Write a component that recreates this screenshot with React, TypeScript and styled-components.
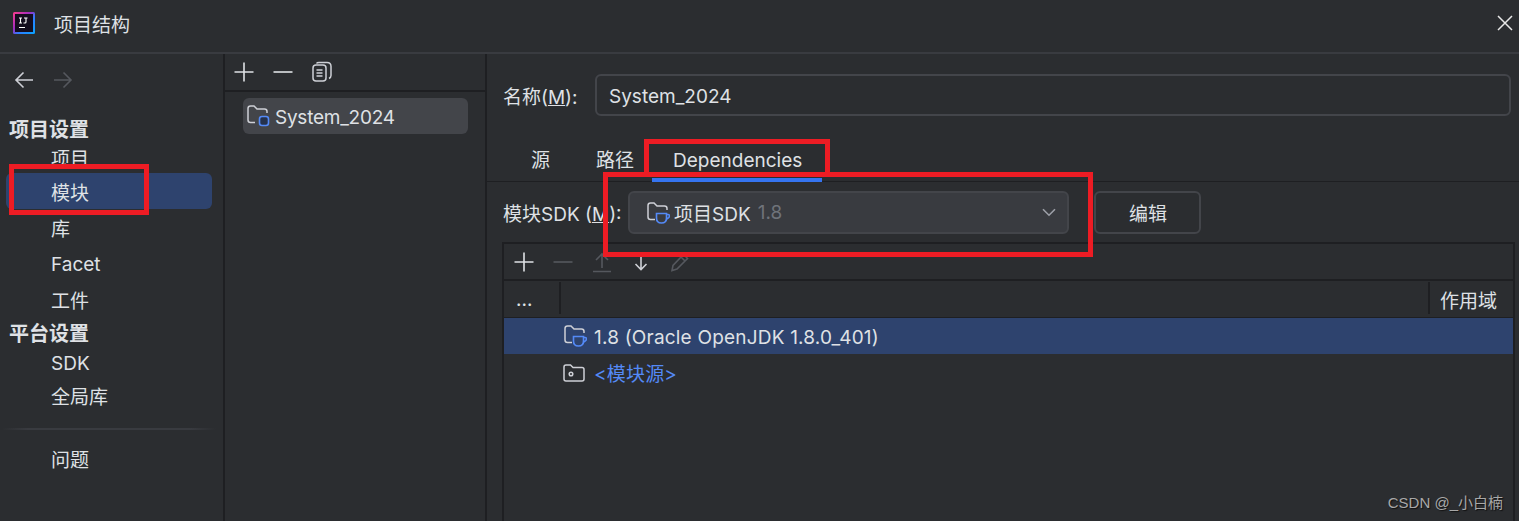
import React from "react";
import styled, { createGlobalStyle } from "styled-components";

const Global = createGlobalStyle`
  html, body { margin: 0; padding: 0; background: #2b2d30; }
  body { width: 1519px; height: 521px; overflow: hidden; }
  #root { width: 1519px; height: 521px; }
  * { box-sizing: border-box; }
`;

const Page = styled.div`
  position: relative;
  width: 1519px;
  height: 521px;
  overflow: hidden;
  display: flex;
  flex-direction: column;
  background: #2b2d30;
  color: #dfe1e5;
  font-family: Inter, "Noto Sans CJK SC", sans-serif;
  font-size: 19px;
`;

const TitleBar = styled.header`
  height: 54px;
  flex: none;
  display: flex;
  align-items: center;
  padding: 0 6px 6px 13px;
  border-bottom: 2px solid #393b40;
`;
const TitleText = styled.span`
  margin-left: 19px;
  flex: 1;
  font-size: 19px;
`;
const Body = styled.div`
  flex: 1;
  display: flex;
  min-height: 0;
`;
const Sidebar = styled.nav`
  width: 225px;
  flex: none;
  padding: 0 11px 0 6px;
  border-right: 2px solid #1e1f22;
  display: flex;
  flex-direction: column;
`;
const NavArrows = styled.div`
  height: 26px;
  margin-top: 13px;
  display: flex;
  gap: 19px;
  padding-left: 8px;
  align-items: center;
`;
const SectionHead = styled.div<{ $top: number }>`
  margin: ${(p) => p.$top}px 0 0 3px;
  font-size: 20px;
  line-height: 28px;
  font-weight: 700;
  color: #dfe1e5;
`;
const NavItem = styled.div<{ $active?: boolean; $h?: number; $mb?: number; $latin?: boolean }>`
  height: ${(p) => p.$h ?? 36}px;
  margin-bottom: ${(p) => p.$mb ?? 0}px;
  display: flex;
  align-items: center;
  padding: ${(p) => (p.$latin ? "2px" : "0")} 0 0 45px;
  border-radius: 6px;
  background: ${(p) => (p.$active ? "#2e436e" : "transparent")};
`;
const NavDivider = styled.div`
  height: 2px;
  margin: 17px -4px 10px;
  background: linear-gradient(90deg, #2b2d30, #393b40 12%, #393b40 88%, #2b2d30);
`;
const ModulePanel = styled.section`
  width: 262px;
  flex: none;
  border-right: 2px solid #1e1f22;
  display: flex;
  flex-direction: column;
`;
const IconBar = styled.div`
  height: 38px;
  flex: none;
  display: flex;
  align-items: center;
  gap: 17px;
  padding-left: 8px;
  border-bottom: 2px solid #1e1f22;
`;
const ModuleRow = styled.div`
  margin: 6px 17px 0 18px;
  height: 36px;
  display: flex;
  align-items: center;
  gap: 5px;
  padding-left: 3px;
  border-radius: 6px;
  background: #43454a;
  letter-spacing: -0.25px;
`;
const ModuleName = styled.span`
  padding-top: 2px;
`;
const Detail = styled.main`
  flex: 1;
  min-width: 0;
  display: flex;
  flex-direction: column;
`;
const NameRow = styled.div`
  display: flex;
  align-items: center;
  padding: 20px 8px 0 16px;
`;
const FieldLabel = styled.label<{ $w: number }>`
  width: ${(p) => p.$w}px;
  flex: none;
  white-space: nowrap;
`;
const NameInput = styled.div`
  flex: 1;
  height: 42px;
  display: flex;
  align-items: center;
  padding: 2px 0 0 12px;
  border: 2px solid #43454a;
  border-radius: 6px;
`;
const Tabs = styled.div`
  position: relative;
  height: 66px;
  flex: none;
  display: flex;
  align-items: flex-start;
  padding: 33px 0 0 44px;
  border-bottom: 1.5px solid #1e1f22;
`;
const Tab = styled.div<{ $ml?: number }>`
  margin-left: ${(p) => p.$ml ?? 0}px;
  line-height: 24px;
`;
const TabUnderline = styled.div`
  position: absolute;
  left: 165px;
  bottom: -1px;
  width: 170px;
  height: 4px;
  background: #3574f0;
`;
const SdkRow = styled.div`
  display: flex;
  align-items: center;
  padding: 9px 0 0 16px;
`;
const Combo = styled.div`
  width: 441px;
  height: 43px;
  display: flex;
  align-items: center;
  gap: 4px;
  padding: 0 11px 0 16px;
  background: #393b40;
  border: 2px solid #43454a;
  border-radius: 6px;
`;
const Muted = styled.span`
  color: #6f737a;
  margin-left: 3px;
  flex: 1;
`;
const EditButton = styled.button`
  width: 107px;
  height: 43px;
  margin-left: 25px;
  background: transparent;
  border: 2px solid #43454a;
  border-radius: 6px;
  color: #dfe1e5;
  font: inherit;
  padding: 0 0 0 1px;
`;
const TableBox = styled.section`
  flex: 1;
  margin: 8px 4px 0 15px;
  border: 2px solid #1e1f22;
  border-bottom: none;
  display: flex;
  flex-direction: column;
  min-height: 0;
`;
const TableTools = styled.div`
  height: 37px;
  flex: none;
  display: flex;
  align-items: center;
  gap: 17px;
  padding-left: 9px;
  border-bottom: 2px solid #1e1f22;
`;
const TableHead = styled.div`
  height: 37px;
  flex: none;
  display: flex;
  align-items: stretch;
  border-bottom: 1.5px solid #1e1f22;
`;
const HeadCell = styled.div<{ $w?: number; $pad?: number }>`
  ${(p) => (p.$w ? `width: ${p.$w}px; flex: none;` : "flex: 1;")}
  display: flex;
  align-items: center;
  padding: 2px 0 0 ${(p) => p.$pad ?? 10}px;
  margin: 1px 0 3px;
  white-space: nowrap;
  & + & { border-left: 2px solid #1e1f22; }
`;
const Row = styled.div<{ $selected?: boolean }>`
  height: 36px;
  display: flex;
  align-items: center;
  gap: 7px;
  padding-left: 59px;
  background: ${(p) => (p.$selected ? "#2e436e" : "transparent")};
  letter-spacing: 0.2px;
`;
const RowText = styled.span`
  padding-top: 2px;
`;
const LinkText = styled.span`
  color: #548af7;
  margin-left: 2px;
`;
const SourceIconWrap = styled.span`
  display: flex;
  padding-top: 2px;
`;
const Watermark = styled.div`
  position: absolute;
  right: 16px;
  bottom: 8px;
  font-family: "Liberation Sans", "Noto Sans CJK SC", sans-serif;
  font-size: 15px;
  line-height: 20px;
  color: #a8a8a8;
  text-shadow: 1px 1px 1px #111;
`;
const RedBox = styled.div<{ $l: number; $t: number; $w: number; $h: number }>`
  position: absolute;
  left: ${(p) => p.$l}px;
  top: ${(p) => p.$t}px;
  width: ${(p) => p.$w}px;
  height: ${(p) => p.$h}px;
  border: 5px solid #ed1c24;
  pointer-events: none;
`;
const CloseWrap = styled.span`
  display: flex;
`;

const S = { fill: "none", strokeWidth: 1.6, strokeLinecap: "butt" as const };

const Plus = ({ c = "#dfe1e5" }: { c?: string }) => (
  <svg width="22" height="22" viewBox="0 0 22 22" {...S} stroke={c}>
    <path d="M11 1.5v19M1.5 11h19" />
  </svg>
);
const Minus = ({ c = "#dfe1e5" }: { c?: string }) => (
  <svg width="22" height="22" viewBox="0 0 22 22" {...S} stroke={c}>
    <path d="M1.5 11h19" />
  </svg>
);
const Copy = () => (
  <svg width="22" height="22" viewBox="0 0 22 22" {...S} stroke="#ced0d6" strokeWidth={1.5}>
    <rect x="2" y="4" width="13" height="16" rx="3" />
    <path d="M5.5 2.5 Q6 1.5 8 1.5h8q4 0 4 4v9q0 2-2 3M5.5 9h6M5.5 12h6M5.5 15h6" />
  </svg>
);
const ArrowLeft = () => (
  <svg width="20" height="18" viewBox="0 0 20 18" {...S} stroke="#ced0d6">
    <path d="M19 9H2M9.5 1.5 2 9l7.5 7.5" />
  </svg>
);
const ArrowRight = () => (
  <svg width="20" height="18" viewBox="0 0 20 18" {...S} stroke="#55585e">
    <path d="M1 9h17M10.5 1.5 18 9l-7.5 7.5" />
  </svg>
);
const UpToBar = () => (
  <svg width="22" height="22" viewBox="0 0 22 22" {...S} stroke="#55585e">
    <path d="M11 17V3M5 9l6-6 6 6M2 20.5h18" />
  </svg>
);
const Down = () => (
  <svg width="22" height="22" viewBox="0 0 22 22" {...S} stroke="#ced0d6">
    <path d="M11 3.5v15M5.5 13l5.5 5.5 5.5-5.5" />
  </svg>
);
const Pencil = () => (
  <svg width="22" height="22" viewBox="0 0 22 22" {...S} stroke="#55585e">
    <path d="M14.5 3.5l4 4L8 18l-5 1.5L4 14.5zM12 6l4 4" />
  </svg>
);
const Close = () => (
  <svg width="16" height="16" viewBox="0 0 16 16" fill="none" stroke="#e8e8e8" strokeWidth="1.5">
    <path d="M1 1l14 14M15 1 1 15" />
  </svg>
);
const Chevron = () => (
  <svg width="14" height="9" viewBox="0 0 14 9" fill="none" stroke="#9da0a8" strokeWidth="1.6">
    <path d="M1 1.2 7 7.2l6-6" />
  </svg>
);
const folderPath = "M9 18.5H4.5Q2 18.5 2 16V4.5Q2 2 4.5 2H8l3 3h7.5Q21 5 21 7.5V9";
const ModuleFolder = () => (
  <svg width="24" height="24" viewBox="0 0 24 24" fill="none">
    <path d={folderPath} stroke="#ced0d6" strokeWidth="1.5" />
    <rect x="13.5" y="12.5" width="9" height="9" rx="2.5" fill="#25324d" stroke="#548af7" strokeWidth="1.6" />
  </svg>
);
const JdkFolder = () => (
  <svg width="24" height="24" viewBox="0 0 24 24" fill="none">
    <path d={folderPath} stroke="#ced0d6" strokeWidth="1.5" />
    <path d="M10.5 12.5h10v4.5q0 5-5 5t-5-5zM20.5 13.5h1.5q1.5 0 1.5 1.5t-3 3.2" stroke="#548af7" strokeWidth="1.6" />
  </svg>
);
const SourceFolder = () => (
  <svg width="22" height="22" viewBox="0 0 22 22" fill="none" stroke="#ced0d6" strokeWidth="1.5">
    <path d="M1 5q0-2 2-2h4.5L10 5.5h9q2 0 2 2v9.5q0 2-2 2H3q-2 0-2-2z" />
    <circle cx="8" cy="12" r="1.8" />
  </svg>
);
const IdeaLogo = () => (
  <svg width="22" height="22" viewBox="0 0 22 22">
    <defs>
      <linearGradient id="ij" x1="0" y1="0" x2="1" y2="1">
        <stop offset="0" stopColor="#ff3d8b" />
        <stop offset="0.4" stopColor="#a02cc0" />
        <stop offset="0.6" stopColor="#2f7bff" />
        <stop offset="1" stopColor="#08a6ff" />
      </linearGradient>
    </defs>
    <rect x="0" y="0" width="22" height="22" rx="1.5" fill="url(#ij)" />
    <rect x="2" y="2" width="18" height="18" fill="#140d1e" />
    <path d="M6 6h3M7.5 6v5M6 11h3M11 6h3.5M13 6v4q0 1-1 1h-1.5M6 15.5h6" stroke="#fff" strokeWidth="1.1" fill="none" />
  </svg>
);

export default function App() {
  return (
    <Page>
      <Global />
      <TitleBar>
        <IdeaLogo />
        <TitleText>项目结构</TitleText>
        <CloseWrap>
          <Close />
        </CloseWrap>
      </TitleBar>
      <Body>
        <Sidebar>
          <NavArrows>
            <ArrowLeft />
            <ArrowRight />
          </NavArrows>
          <SectionHead $top={23}>项目设置</SectionHead>
          <NavItem $h={27} $mb={2}>项目</NavItem>
          <NavItem $active>模块</NavItem>
          <NavItem>库</NavItem>
          <NavItem $latin>Facet</NavItem>
          <NavItem>工件</NavItem>
          <SectionHead $top={3}>平台设置</SectionHead>
          <NavItem $h={31}>SDK</NavItem>
          <NavItem $h={32}>全局库</NavItem>
          <NavDivider />
          <NavItem>问题</NavItem>
        </Sidebar>
        <ModulePanel>
          <IconBar>
            <Plus />
            <Minus />
            <Copy />
          </IconBar>
          <ModuleRow>
            <ModuleFolder />
            <ModuleName>System_2024</ModuleName>
          </ModuleRow>
        </ModulePanel>
        <Detail>
          <NameRow>
            <FieldLabel $w={92}>
              名称(<u>M</u>):
            </FieldLabel>
            <NameInput>System_2024</NameInput>
          </NameRow>
          <Tabs>
            <Tab>源</Tab>
            <Tab $ml={46}>路径</Tab>
            <Tab $ml={39}>Dependencies</Tab>
            <TabUnderline />
          </Tabs>
          <SdkRow>
            <FieldLabel $w={125}>
              模块SDK (<u>M</u>):
            </FieldLabel>
            <Combo>
              <JdkFolder />
              <span>项目SDK</span>
              <Muted>1.8</Muted>
              <Chevron />
            </Combo>
            <EditButton>编辑</EditButton>
          </SdkRow>
          <TableBox>
            <TableTools>
              <Plus />
              <Minus c="#55585e" />
              <UpToBar />
              <Down />
              <Pencil />
            </TableTools>
            <TableHead>
              <HeadCell $w={55} $pad={12}>...</HeadCell>
              <HeadCell />
              <HeadCell $w={85}>作用域</HeadCell>
            </TableHead>
            <Row $selected>
              <JdkFolder />
              <RowText>1.8 (Oracle OpenJDK 1.8.0_401)</RowText>
            </Row>
            <Row>
              <SourceIconWrap>
                <SourceFolder />
              </SourceIconWrap>
              <LinkText>&lt;模块源&gt;</LinkText>
            </Row>
          </TableBox>
        </Detail>
      </Body>
      <Watermark>CSDN @_小白楠</Watermark>
      <RedBox $l={9} $t={164} $w={140} $h={51} />
      <RedBox $l={644} $t={139} $w={186} $h={38} />
      <RedBox $l={603} $t={172} $w={490} $h={85} />
    </Page>
  );
}
